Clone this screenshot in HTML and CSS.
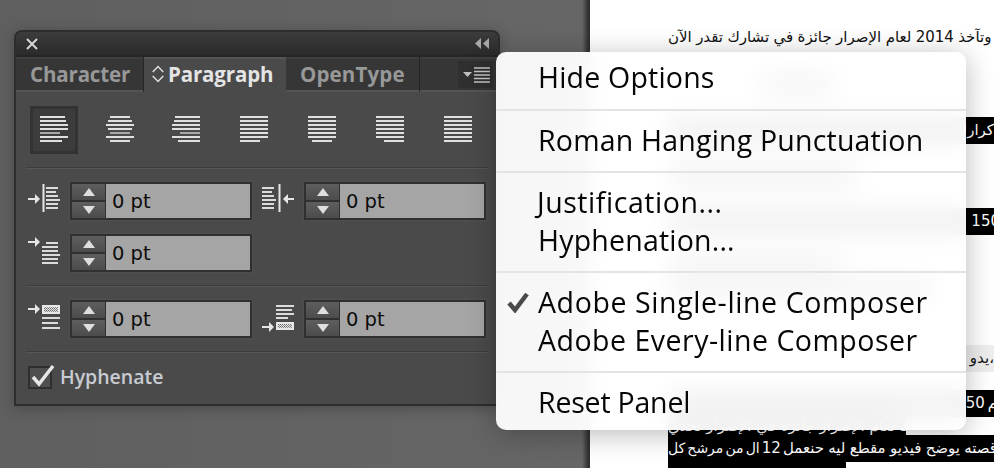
FILE: index.html
```html
<!DOCTYPE html>
<html lang="en">
<head>
<meta charset="utf-8">
<title>Paragraph panel</title>
<link rel="stylesheet" href="styles.css">
</head>
<body>
<svg class="defs" width="0" height="0" aria-hidden="true">
  <defs>
    <pattern id="dots" width="2" height="2" patternUnits="userSpaceOnUse">
      <rect width="2" height="2" fill="#e4e4e4"/>
      <rect width="1" height="1" fill="#6e6e6e"/>
      <rect x="1" y="1" width="1" height="1" fill="#8a8a8a"/>
    </pattern>
    <symbol id="up" viewBox="0 0 12 8"><path d="M6 0 12 8H0Z"/></symbol>
    <symbol id="down" viewBox="0 0 12 8"><path d="M0 0H12L6 8Z"/></symbol>
  </defs>
</svg>
<div class="desktop">
  <div class="backdrop"></div>
  <main class="doc">
    <div class="line"><span class="w">كل</span> <span class="w">مرشح</span> <span class="w">من</span> <span class="w">ال</span> <span class="w">12</span> <span class="w">حنعمل</span> <span class="w">ليه</span> <span class="w">مقطع</span> <span class="w">فيديو</span> <span class="w">يوضح</span> <span class="w">قصته</span></div>
    <div class="line l-first"><span class="w">الآن</span> <span class="w">تقدر</span> <span class="w">تشارك</span> <span class="w">في</span> <span class="w">جائزة</span> <span class="w">الإصرار</span> <span class="w">لعام</span> <span class="w">2014</span> <span class="w">وتآخذ</span></div>
    <div class="line hl faint l-blob"></div>
    <div class="line hl l-a"><span class="end">كرارك</span></div>
    <div class="line hl faint l-b"></div>
    <div class="line hl l-c"><span class="end end-clip">150</span></div>
    <div class="line hl faint l-d"></div>
    <div class="line hl faint l-e"></div>
    <div class="line pale l-f"><span class="end">يدو،</span></div>
    <div class="line hl l-g"><span class="end end-near"><span class="w">50</span> <span class="w">م</span></span></div>
    <div class="line hl l-h"><span class="w">تحدي</span> <span class="w">الإصرار</span> <span class="w">في</span> <span class="w">جائزة</span> <span class="w">الإصرار</span> <span class="w">لعام</span> <span class="w">2014</span></div>
    <div class="line hl l-tight"><span class="w">كل</span> <span class="w">مرشح</span> <span class="w">من</span> <span class="w">ال</span> <span class="w num">12</span> <span class="rest"><span class="w">حنعمل</span> <span class="w">ليه</span> <span class="w">مقطع</span> <span class="w">فيديو</span> <span class="w">يوضح</span> <span class="w">قصته</span></span></div>
    <div class="line hl l-i"><span class="w">تقدر</span> <span class="w">تشارك</span> <span class="w">في</span> <span class="w">جائزة</span> <span class="w">الإصرار</span> <span class="w">لعام</span></div>
  </main>

  <section class="panel">
    <header class="titlebar">
      <svg class="close" width="12" height="12" viewBox="0 0 12 12"><path d="M1 1 11 11M11 1 1 11"/></svg>
      <svg class="collapse" width="14" height="11" viewBox="0 0 14 11"><path d="M6 0V11L0 5.5ZM14 0V11L8 5.5Z"/></svg>
    </header>
    <nav class="tabs">
      <div class="tab tab-char">Character</div>
      <div class="tab tab-para">
        <svg class="updown" width="12" height="18" viewBox="0 0 12 18"><path d="M.7 7 6 1.5 11.3 7M.7 11 6 16.5 11.3 11"/></svg>
        Paragraph
      </div>
      <div class="tab tab-open">OpenType</div>
      <div class="tab-rest">
        <div class="menu-btn">
          <svg width="28" height="16" viewBox="0 0 28 16"><path class="tri" d="M0 5H9L4.5 10Z"/><path class="bars" d="M11 1H27M11 4.500H27M11 8H27M11 11.500H27M11 15H27"/></svg>
        </div>
      </div>
    </nav>
    <div class="panel-body">
      <div class="aligns">
        <div class="align on"><svg width="28" height="28" viewBox="0 0 28 28"><path d="M0 2H25M0 6H26M0 10H28M0 14H28"/><path class="dim" d="M0 18H20"/><path d="M0 22H28M0 26H22"/></svg></div>
        <div class="align"><svg width="28" height="28" viewBox="0 0 28 28"><path d="M4 2H24M2 6H26M0 10H28M2 14H26"/><path class="dim" d="M4 18H24"/><path d="M0 22H28M4 26H24"/></svg></div>
        <div class="align"><svg width="28" height="28" viewBox="0 0 28 28"><path d="M3 2H28M2 6H28M0 10H28M0 14H28"/><path class="dim" d="M8 18H28"/><path d="M0 22H28M6 26H28"/></svg></div>
        <div class="align"><svg width="28" height="28" viewBox="0 0 28 28"><path d="M0 2H28M0 6H28M0 10H28M0 14H28M0 18H28M0 22H28M0 26H20"/></svg></div>
        <div class="align"><svg width="28" height="28" viewBox="0 0 28 28"><path d="M0 2H28M0 6H28M0 10H28M0 14H28M0 18H28M0 22H28M4 26H24"/></svg></div>
        <div class="align"><svg width="28" height="28" viewBox="0 0 28 28"><path d="M0 2H28M0 6H28M0 10H28M0 14H28M0 18H28M0 22H28M8 26H28"/></svg></div>
        <div class="align"><svg width="28" height="28" viewBox="0 0 28 28"><path d="M0 2H28M0 6H28M0 10H28M0 14H28M0 18H28M0 22H28M0 26H28"/></svg></div>
      </div>
      <div class="rule"></div>
      <div class="fields">
        <svg class="ico" width="42" height="38" viewBox="0 0 42 38"><path class="thin" d="M15.500 2V30"/><path d="M18 6H30M18 10H28M18 14H30M18 18H32M18 22H30M18 26H30"/><path class="thin" d="M0 17H9"/><path class="head" d="M7 12 12 17 7 22Z"/></svg>
        <div class="spin"><div class="steps"><button class="step" type="button"><svg width="12" height="8"><use href="#up"/></svg></button><button class="step" type="button"><svg width="12" height="8"><use href="#down"/></svg></button></div><div class="val">0 pt</div></div>
        <svg class="ico" width="52" height="38" viewBox="0 0 52 38"><path d="M10 6H22M10 10H20M10 14H22M10 18H24M10 22H22M10 26H22"/><path class="thin" d="M27.500 2V30"/><path class="thin" d="M34 17H42"/><path class="head" d="M36 12 31 17 36 22Z"/></svg>
        <div class="spin"><div class="steps"><button class="step" type="button"><svg width="12" height="8"><use href="#up"/></svg></button><button class="step" type="button"><svg width="12" height="8"><use href="#down"/></svg></button></div><div class="val">0 pt</div></div>
        <svg class="ico" width="42" height="38" viewBox="0 0 42 38"><path d="M18 9H30"/><path d="M14 13H30M14 17H30M14 21H32M14 25H30M14 29H30"/><path class="thin" d="M0 8H9"/><path class="head" d="M7 3 12 8 7 13Z"/></svg>
        <div class="spin"><div class="steps"><button class="step" type="button"><svg width="12" height="8"><use href="#up"/></svg></button><button class="step" type="button"><svg width="12" height="8"><use href="#down"/></svg></button></div><div class="val">0 pt</div></div>
      </div>
      <div class="rule"></div>
      <div class="fields">
        <svg class="ico" width="42" height="38" viewBox="0 0 42 38"><rect class="box" x="14" y="5" width="18" height="9"/><rect x="16" y="7" width="14" height="5" fill="url(#dots)"/><path d="M14 18H32M14 23H30M14 28H32"/><path class="thin" d="M0 9H9"/><path class="head" d="M7 4 12 9 7 14Z"/></svg>
        <div class="spin"><div class="steps"><button class="step" type="button"><svg width="12" height="8"><use href="#up"/></svg></button><button class="step" type="button"><svg width="12" height="8"><use href="#down"/></svg></button></div><div class="val">0 pt</div></div>
        <svg class="ico" width="52" height="38" viewBox="0 0 52 38"><path d="M24 6H42M24 10H40M24 14H42M24 18H36"/><rect class="box" x="24" y="22" width="18" height="8"/><rect x="26" y="24" width="14" height="4" fill="url(#dots)"/><path class="thin" d="M10 27H19"/><path class="head" d="M17 22 22 27 17 32Z"/></svg>
        <div class="spin"><div class="steps"><button class="step" type="button"><svg width="12" height="8"><use href="#up"/></svg></button><button class="step" type="button"><svg width="12" height="8"><use href="#down"/></svg></button></div><div class="val">0 pt</div></div>
      </div>
      <div class="rule rule-c"></div>
      <label class="hyphen">
        <svg width="28" height="26" viewBox="0 0 28 26"><rect class="cb" x="1" y="3" width="22" height="21"/><path class="tick" d="M5 13 11 20 25 2"/></svg>
        <span>Hyphenate</span>
      </label>
    </div>
  </section>

  <section class="menu">
    <div class="group group-first"><div class="item">Hide Options</div></div>
    <div class="group"><div class="item">Roman Hanging Punctuation</div></div>
    <div class="group"><div class="item sp-just">Justification...</div><div class="item">Hyphenation...</div></div>
    <div class="group">
      <div class="item sp-wide"><svg class="check" width="22" height="21" viewBox="0 0 22 21"><path d="M2 11 8 18 20 2"/></svg>Adobe Single-line Composer</div>
      <div class="item sp-mid">Adobe Every-line Composer</div>
    </div>
    <div class="group group-last"><div class="item sp-tight">Reset Panel</div></div>
  </section>
</div>
</body>
</html>
```

FILE: styles.css
```css
* { box-sizing: border-box; }
html, body { margin: 0; height: 100%; overflow: hidden; }
.defs { position: absolute; }

.desktop {
  position: relative;
  width: 994px;
  height: 468px;
  display: grid;
  grid-template-columns: 590px 1fr;
  overflow: hidden;
  font-family: "Open Sans", "Liberation Sans", sans-serif;
}
.backdrop {
  background: linear-gradient(90deg, #5f5f5f 0, #666 560px, #666 582px, #333 588px, #2e2e2e 590px);
}

/* Document page */
.doc {
  background: #fff;
  margin-top: -24px;
  padding-left: 78px;
  font-family: "DejaVu Sans", sans-serif;
  font-size: 15px;
  color: #111;
  overflow: hidden;
}
.line {
  height: 27px;
  line-height: 27px;
  white-space: nowrap;
  overflow: hidden;
}
.w { display: inline-block; }
.hl { background: #000; color: #fff; }
.faint { background: #555; }
.pale { background: #eee; }
.end { display: block; text-align: right; }
.end-clip { margin-right: -6px; }
.end-near { margin-right: -3px; word-spacing: -2px; }
.l-first { margin-top: 21px; word-spacing: -.4px; }
.l-blob { margin: 21px 0 0 92px; width: 75px; height: 25px; }
.l-a { margin-top: 20px; }
.l-b { margin-top: 16px; width: 190px; height: 30px; }
.l-c { margin-top: 18px; }
.l-d { margin-top: 17px; width: 175px; height: 23px; }
.l-e { width: 265px; height: 25px; }
.l-f { margin-top: 45px; }
.l-g { margin-top: 18px; }
.l-h { width: 238px; height: 18px; line-height: 18px; }
.l-i { width: 178px; }
.l-tight { font-size: 14px; word-spacing: -2.4px; }
.num { font-size: 15px; }
.rest { font-size: 15px; word-spacing: -.5px; }

/* Panel */
.panel {
  position: absolute;
  left: 14px;
  top: 30px;
  width: 486px;
  height: 376px;
  border: 2px solid #2d2d2d;
  border-radius: 8px 8px 0 0;
  background: #4a4a4a;
  box-shadow: 0 2px 14px rgba(0,0,0,.25);
}
.titlebar {
  height: 25px;
  display: flex;
  align-items: center;
  justify-content: space-between;
  padding: 0 9px 0 10px;
  background: linear-gradient(#3c3c3c, #2b2b2b);
  border-bottom: 2px solid #262626;
  border-radius: 6px 6px 0 0;
}
.close path { stroke: #d6d6d6; stroke-width: 2; fill: none; }
.collapse path { fill: #a8a8a8; }

.tabs {
  height: 35px;
  display: flex;
  font-size: 20.5px;
  line-height: 35px;
  font-weight: 700;
  background: #363636;
}
.tab {
  display: flex;
  align-items: flex-start;
  height: 100%;
  color: #989898;
  letter-spacing: -.15px;
  box-shadow: inset 0 2px 0 #3f3f3f, inset 0 -2px 0 #555;
}
.tab-char { width: 128px; padding-left: 14px; border-right: 1px solid #262626; }
.tab-para {
  width: 142px;
  padding-left: 8px;
  background: #4a4a4a;
  color: #e4e4e4;
  box-shadow: inset 0 2px 0 #555;
  gap: 4px;
}
.tab-open { width: 134px; padding-left: 14px; border-right: 1px solid #262626; letter-spacing: .15px; }
.tab-rest {
  flex: 1;
  box-shadow: inset 0 2px 0 #3f3f3f, inset 0 -2px 0 #555;
  padding: 4px 0 0 38px;
}
.updown { margin-top: 8px; }
.updown path { fill: none; stroke: #ddd; stroke-width: 1.5; }
.menu-btn {
  width: 35px;
  height: 27px;
  border-radius: 2px;
  background: #2f2f2f;
  padding: 6px 0 0 5px;
  display: flex;
}
.tri { fill: #bdbdbd; }
.bars { stroke: #c4c4c4; stroke-width: 1.6; fill: none; }

.panel-body { padding: 14px 10px 0 10px; color: #ccc; }
.aligns { display: flex; gap: 20px; padding-left: 4px; height: 48px; }
.align {
  width: 48px;
  height: 48px;
  display: flex;
  align-items: center;
  justify-content: center;
  padding-bottom: 3px;
}
.align:nth-child(2), .align:nth-child(3) { margin-left: -2px; }
.align.on { background: #3c3c3c; border: 3px solid #333; }
.align svg path { stroke: #e0e0e0; stroke-width: 2; fill: none; }
.align svg path.dim { stroke: #a8a8a8; }

.rule {
  height: 2px;
  margin: 13px 0;
  background: linear-gradient(#3d3d3d 50%, #565656 50%);
}
.rule-c { margin: 13px 0 11px; }

.fields {
  display: grid;
  grid-template-columns: 42px 182px 52px 182px;
  grid-auto-rows: 38px;
  row-gap: 14px;
  padding-left: 2px;
}
.ico path { stroke: #dcdcdc; stroke-width: 2; fill: none; }
.ico path.thin { stroke: #e6e6e6; stroke-width: 2; }
.ico path.head { fill: #e6e6e6; stroke: none; }
.ico .box { fill: #e8e8e8; }

.spin {
  display: flex;
  height: 38px;
  border: 2px solid #303030;
  box-shadow: 0 0 0 1px rgba(255,255,255,.03);
}
.steps { width: 34px; display: flex; flex-direction: column; border-right: 1px solid #303030; }
.step {
  flex: 1;
  margin: 0;
  padding: 0;
  border: 0;
  display: flex;
  align-items: center;
  justify-content: center;
  background: linear-gradient(#5e5e5e, #4c4c4c);
}
.step + .step { border-top: 2px solid #303030; }
.step svg { fill: #dedede; display: block; }
.val {
  flex: 1;
  background: #a5a5a5;
  color: #0d0d0d;
  font-family: "DejaVu Sans", sans-serif;
  font-size: 19.5px;
  line-height: 36px;
  padding-left: 6px;
}

.hyphen {
  display: flex;
  align-items: center;
  gap: 4px;
  height: 26px;
  padding-left: 2px;
  font-size: 19.5px;
  line-height: 34px;
  font-weight: 600;
  color: #c8ccd2;
}
.cb { fill: #4f4f4f; stroke: #2f2f2f; stroke-width: 2; }
.tick { fill: none; stroke: #e6e6e6; stroke-width: 3.5; }

/* Menu */
.menu {
  position: absolute;
  left: 496px;
  top: 52px;
  width: 470px;
  height: 378px;
  border-radius: 10px;
  background: rgba(255,255,255,.95);
  -webkit-backdrop-filter: blur(12px);
  backdrop-filter: blur(12px);
  box-shadow: 0 4px 28px rgba(0,0,0,.28);
  color: #060606;
  font-size: 28.5px;
  font-weight: 500;
  letter-spacing: .2px;
}
.group {
  padding: 11px 0 11px 42px;
  border-bottom: 2px solid #e4e4e4;
}
.group-first { padding-top: 7px; padding-bottom: 12px; height: 59px; }
.group-last { border-bottom: 0; }
.item {
  position: relative;
  height: 38px;
  line-height: 36px;
  white-space: nowrap;
}
.sp-just { letter-spacing: .55px; margin-left: -1px; }
.sp-wide { letter-spacing: .6px; }
.sp-mid { letter-spacing: .5px; }
.sp-tight { letter-spacing: -.2px; }
.check {
  position: absolute;
  left: -31px;
  top: 8px;
}
.check path { fill: none; stroke: #4a4a4a; stroke-width: 4.5; }
```
